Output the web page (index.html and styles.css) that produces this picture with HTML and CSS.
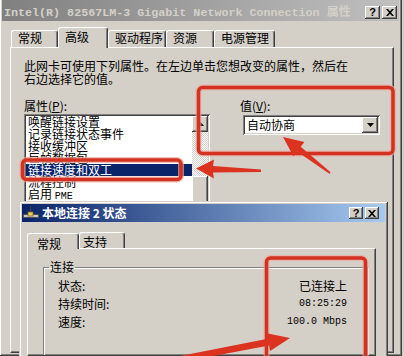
FILE: index.html
```html
<!DOCTYPE html>
<html lang="zh-CN">
<head>
    <meta charset="UTF-8">
    <meta name="viewport" content="width=device-width, initial-scale=1.0">
    <title>网络连接属性</title>
    <link rel="stylesheet" href="styles.css">
</head>
<body>

    <div class="win main-win">
        <div class="titlebar inactive">
            <span class="title">Intel(R) 82567LM-3 Gigabit Network Connection <span class="cjk">属性</span></span>
            <span class="caps">
                <span class="cap">?</span>
                <span class="cap"><svg width="8" height="7" viewBox="0 0 8 7"><path d="M0 0h2l2 2.2L6 0h2L5 3.5 8 7H6L4 4.8 2 7H0l3-3.5z" fill="#000"/></svg></span>
            </span>
        </div>
        <div class="tabs main-tabs">
            <div class="tab w47">常规</div>
            <div class="tab active w50">高级</div>
            <div class="tab w58">驱动程序</div>
            <div class="tab w48">资源</div>
            <div class="tab w61">电源管理</div>
        </div>
        <div class="panel main-panel">
            <p class="intro">此网卡可使用下列属性。在左边单击您想改变的属性，然后在<br>右边选择它的值。</p>
            <div class="props">
                <div class="prop-col">
                    <div class="label">属性(<u>P</u>):</div>
                    <div class="listbox sunken">
                        <ul class="items">
                            <li>唤醒链接设置</li>
                            <li>记录链接状态事件</li>
                            <li>接收缓冲区</li>
                            <li>巨帧数据包</li>
                            <li class="sel">链接速度和双工</li>
                            <li>流程控制</li>
                            <li>启用 <span class="mono">PME</span></li>
                        </ul>
                        <div class="vscroll">
                            <div class="sbtn raised"><svg width="7" height="4" viewBox="0 0 7 4"><path d="M3.5 0L7 4H0z" fill="#000"/></svg></div>
                            <div class="track"></div>
                            <div class="thumb raised"></div>
                        </div>
                    </div>
                </div>
                <div class="value-col">
                    <div class="label">值(<u>V</u>):</div>
                    <div class="combo sunken">
                        <span>自动协商</span>
                        <div class="sbtn raised"><svg width="7" height="4" viewBox="0 0 7 4"><path d="M0 0h7L3.5 4z" fill="#000"/></svg></div>
                    </div>
                </div>
            </div>
        </div>
    </div>

    <div class="win status-win">
        <div class="titlebar active-bar">
            <svg class="net-icon" width="16" height="16" viewBox="0 0 16 16">
                <path d="M7.5 1v8" stroke="#404040" stroke-width="1.4"/>
                <rect x="0.5" y="9.5" width="15" height="3" fill="#c8c8c8" stroke="#505050"/>
                <rect x="5" y="7" width="5" height="4" fill="#e8d060" stroke="#806820" stroke-width="0.8"/>
            </svg>
            <span class="title">本地连接 2 状态</span>
            <span class="caps small">
                <span class="cap">?</span>
                <span class="cap"><svg width="8" height="7" viewBox="0 0 8 7"><path d="M0 0h2l2 2.2L6 0h2L5 3.5 8 7H6L4 4.8 2 7H0l3-3.5z" fill="#000"/></svg></span>
            </span>
        </div>
        <div class="tabs status-tabs">
            <div class="tab active w52">常规</div>
            <div class="tab w46">支持</div>
        </div>
        <div class="panel status-panel">
            <fieldset class="group">
                <legend>连接</legend>
                <div class="row"><span>状态:</span><span>已连接上</span></div>
                <div class="row"><span>持续时间:</span><span class="mono">08:25:29</span></div>
                <div class="row"><span>速度:</span><span class="mono">100.0 Mbps</span></div>
            </fieldset>
        </div>
    </div>

    <!-- red annotations drawn over the screenshot -->
    <svg class="marks" width="404" height="356" viewBox="0 0 404 356">
        <g fill="none" stroke-linejoin="round">
            <g stroke="#eea69c" stroke-width="6" opacity="0.7">
                <rect x="198.5" y="87.5" width="194.5" height="66" rx="4"/>
                <rect x="22.5" y="160" width="158.5" height="19.5" rx="4"/>
                <rect x="266.5" y="258" width="99" height="120" rx="4"/>
            </g>
            <g stroke="#d2321f" stroke-width="3.5">
                <rect x="198.5" y="87.5" width="194.5" height="66" rx="4"/>
                <rect x="22.5" y="160" width="158.5" height="19.5" rx="4"/>
                <rect x="266.5" y="258" width="99" height="120" rx="4"/>
            </g>
        </g>
        <g fill="#dc3220">
            <polygon points="196,168.5 214,159.5 213,166 261,169.5 261,172 213,172.5 214,178.5"/>
            <polygon points="283,137 304.4,142.1 300.7,146.8 330.6,172.2 329.4,173.8 297.1,151.6 293.4,156.3"/>
            <polygon points="290,338 266.7,333.3 267.7,338.7 170,358 171,364 269.1,345.5 270.1,350.9"/>
        </g>
    </svg>

</body>
</html>
```

FILE: styles.css
```css
* {
    box-sizing: border-box;
}
body {
    margin: 0;
    width: 404px;
    height: 356px;
    overflow: hidden;
    position: relative;
    background-color: #d4d0c8;
    font-family: "Noto Sans CJK SC", "Noto Sans", sans-serif;
    font-size: 12px;
    line-height: 12px;
    color: #000;
}
.mono {
    font-family: "Liberation Mono", monospace;
    font-size: 10px;
}
.raised {
    background-color: #d4d0c8;
    box-shadow: inset -1px -1px #404040, inset 1px 1px #fff, inset -2px -2px #808080;
}
.sunken {
    box-shadow: inset 1px 1px #808080, inset -1px -1px #fff, inset 2px 2px #404040, inset -2px -2px #d4d0c8;
}
.win {
    background-color: #d4d0c8;
    box-shadow: inset 1px 1px #d4d0c8, inset -1px -1px #404040, inset 2px 2px #fff, inset -2px -2px #808080;
    padding: 3px;
    display: flex;
    flex-direction: column;
    overflow: hidden;
}
.main-win {
    width: 403px;
    height: 359px;
    margin: -3px 0 0 -1px;
}
.titlebar {
    display: flex;
    align-items: center;
    flex-shrink: 0;
}
.titlebar .title {
    white-space: nowrap;
    font-weight: bold;
}
.inactive {
    height: 21px;
    padding: 3px 2px 0 2px;
    background: linear-gradient(to right, #808080, #c0c0c0);
    color: #d4d0c8;
}
.inactive .title {
    font-family: "Liberation Mono", monospace;
    font-size: 11.7px;
}
.inactive .title .cjk {
    font-family: "Noto Sans CJK SC", sans-serif;
    font-size: 12px;
}
.caps {
    margin-left: auto;
    display: flex;
    gap: 2px;
}
.cap {
    width: 15px;
    height: 13px;
    display: flex;
    align-items: center;
    justify-content: center;
    background-color: #d4d0c8;
    box-shadow: inset -1px -1px #404040, inset 1px 1px #fff, inset -2px -2px #808080;
    font-family: "Liberation Sans", sans-serif;
    font-weight: bold;
    font-size: 11px;
    color: #000;
}
.caps.small .cap {
    width: 14px;
    height: 12px;
}
.tabs {
    display: flex;
    align-items: flex-end;
    position: relative;
    z-index: 1;
    flex-shrink: 0;
}
.tab {
    height: 17px;
    padding: 1px 0 0 6px;
    border-top: 1px solid #fff;
    border-left: 1px solid #fff;
    border-right: 1px solid #404040;
    border-radius: 3px 3px 0 0;
    box-shadow: inset -1px 0 #808080;
    background-color: #d4d0c8;
    white-space: nowrap;
}
.tab.active {
    height: 21px;
    padding-top: 3px;
    margin-bottom: -1px;
}
.w46 { width: 46px; }
.w47 { width: 47px; }
.w48 { width: 48px; }
.w50 { width: 50px; }
.w52 { width: 52px; }
.w58 { width: 58px; }
.w61 { width: 61px; }
.main-tabs {
    height: 20px;
    margin: 6px 0 0 9px;
}
.panel {
    flex: 1;
    border: 1px solid;
    border-color: #fff #404040 #404040 #fff;
    box-shadow: inset -1px -1px #808080;
}
.main-panel {
    margin: 0 5px 0 8px;
    padding: 11px 0 0 13px;
}
.intro {
    margin: 0;
    line-height: 13px;
    white-space: nowrap;
}
.props {
    display: flex;
    margin-top: 14px;
}
.label {
    line-height: 13px;
}
.label u {
    text-underline-offset: 1px;
}
.listbox {
    width: 186px;
    height: 100px;
    margin-top: 2px;
    padding: 2px;
    background-color: #fff;
    display: flex;
}
.items {
    flex: 1;
    list-style: none;
    margin: 0;
    padding: 0;
}
.items li {
    height: 12px;
    line-height: 12px;
    padding-left: 2px;
    white-space: nowrap;
}
.items li.sel {
    background-color: #0a246a;
    color: #fff;
}
.vscroll {
    width: 16px;
    display: flex;
    flex-direction: column;
}
.sbtn {
    width: 16px;
    height: 16px;
    display: flex;
    align-items: center;
    justify-content: center;
    flex-shrink: 0;
}
.track {
    height: 44px;
    background: repeating-conic-gradient(#fff 0 25%, #d4d0c8 0 50%) 0 0 / 2px 2px;
}
.thumb {
    flex: 1;
}
.value-col {
    margin-left: 30px;
}
.combo {
    width: 137px;
    height: 20px;
    margin: 3px 0 0 3px;
    padding: 2px 2px 2px 4px;
    background-color: #fff;
    display: flex;
    align-items: center;
}
.combo .sbtn {
    margin-left: auto;
}
.status-win {
    position: absolute;
    left: 19px;
    top: 201px;
    width: 369px;
    height: 158px;
    z-index: 5;
}
.active-bar {
    height: 18px;
    padding: 0 6px 0 1px;
    background: linear-gradient(to right, #0a246a, #a6caf0);
    color: #fff;
}
.net-icon {
    margin-right: 3px;
    flex-shrink: 0;
}
.status-tabs {
    height: 20px;
    margin: 6px 0 0 5px;
}
.status-tabs .tab.active {
    padding: 4px 0 0 9px;
}
.status-tabs .tab {
    height: 16px;
    padding: 3px 0 0 3px;
}
.status-panel {
    margin: 0 9px 0 5px;
    overflow: hidden;
}
.group {
    margin: 12px 7px 0 15px;
    padding: 4px 20px 0 5px;
    border: 1px solid #808080;
    box-shadow: inset 1px 1px #fff, 1px 1px #fff;
    min-width: 0;
    height: 100px;
}
.group legend {
    padding: 0 1px;
    line-height: 12px;
}
.row {
    height: 18px;
    line-height: 18px;
    padding-left: 9px;
    display: flex;
    justify-content: space-between;
    white-space: nowrap;
}
.marks {
    position: absolute;
    left: 0;
    top: 0;
    z-index: 10;
    pointer-events: none;
}
```
